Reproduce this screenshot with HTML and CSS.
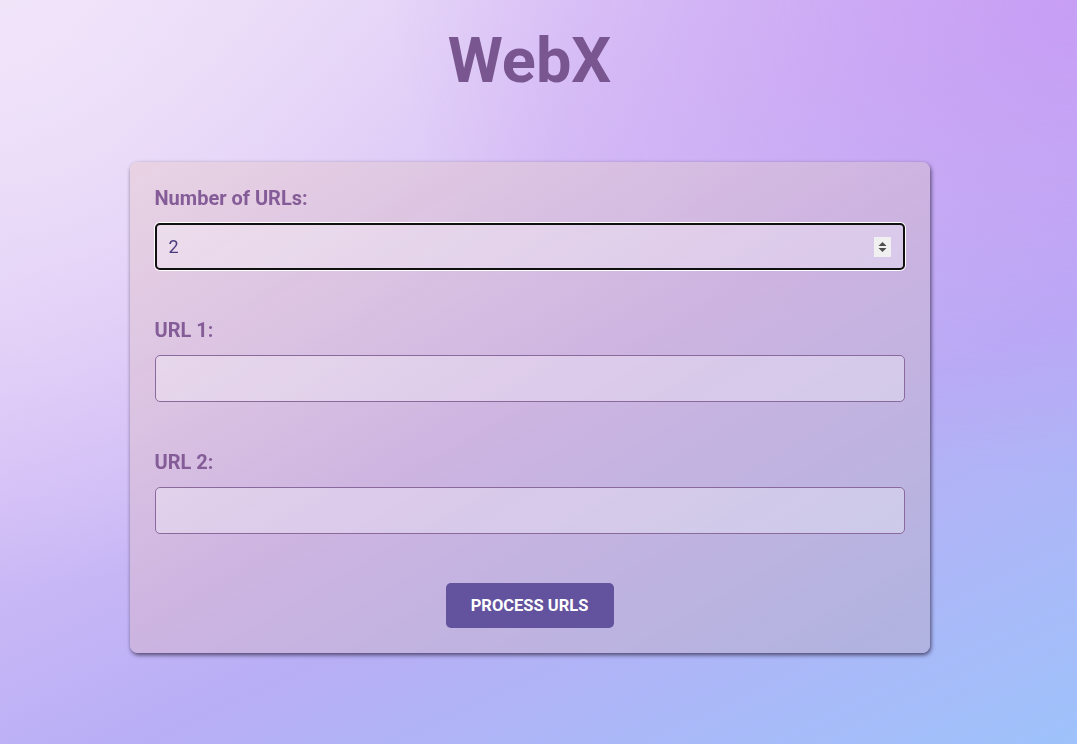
FILE: index.html
```html
<!DOCTYPE html>
<html lang="en">
<head>
<meta charset="utf-8">
<title>WebX</title>
<link rel="stylesheet" href="styles.css">
</head>
<body>
<div class="page">
  <h1 class="title">WebX</h1>
  <form class="card">
    <div class="field">
      <label class="label" for="count">Number of URLs:</label>
      <div class="input-wrap">
        <input class="input input-focused" id="count" type="text" value="2">
        <span class="spinner">
          <svg width="17" height="20" viewBox="0 0 17 20"><path d="M8.5 5 L12.5 9 L4.5 9 Z" fill="#4d4d4d"/><path d="M8.5 15 L12.5 11 L4.5 11 Z" fill="#4d4d4d"/></svg>
        </span>
      </div>
    </div>
    <div class="field">
      <label class="label" for="url1">URL 1:</label>
      <input class="input" id="url1" type="text">
    </div>
    <div class="field">
      <label class="label" for="url2">URL 2:</label>
      <input class="input" id="url2" type="text">
    </div>
    <div class="actions">
      <button class="button" type="button">PROCESS URLS</button>
    </div>
  </form>
</div>
</body>
</html>
```

FILE: styles.css
```css
* { box-sizing: border-box; }
html, body { margin: 0; height: 100%; }
body {
  font-family: Roboto, "Liberation Sans", sans-serif;
  background:
    radial-gradient(circle at 0% 0%, rgba(242,230,250,0.85) 0%, rgba(242,230,250,0) 45%),
    linear-gradient(155deg, #ebdcf8 0%, #d6bff6 35%, #b8aef6 65%, #9ec2fb 100%);
  min-height: 744px;
  overflow: hidden;
}
body::before {
  content: "";
  position: fixed;
  inset: 0;
  background: radial-gradient(ellipse at 100% 0%, rgba(196,150,244,0.8) 0%, rgba(196,150,244,0) 45%);
  pointer-events: none;
}
.page {
  position: relative;
  display: flex;
  flex-direction: column;
  align-items: center;
  padding-top: 24px;
  padding-right: 18px;
}
.title {
  margin: 0;
  font-size: 63px;
  line-height: 74px;
  font-weight: 700;
  color: #7a5690;
}
.card {
  width: 800px;
  margin-top: 64px;
  padding: 24px 25px 25px;
  border-radius: 8px;
  background: linear-gradient(150deg, rgba(232,210,226,0.95) 0%, rgba(206,180,222,0.9) 50%, rgba(176,178,222,0.95) 100%);
  box-shadow: 1px 2px 4px rgba(40,30,60,0.75);
  display: flex;
  flex-direction: column;
}
.field {
  display: flex;
  flex-direction: column;
  margin-bottom: 48px;
}
.label {
  font-size: 20px;
  line-height: 24px;
  font-weight: 700;
  color: #845c97;
  margin-bottom: 13px;
}
.input-wrap { position: relative; }
.input {
  width: 100%;
  height: 47px;
  border: 1px solid #8a6a9c;
  border-radius: 5px;
  background: rgba(255,255,255,0.3);
  font-family: Roboto, "Liberation Sans", sans-serif;
  font-size: 18px;
  color: #4a3a7c;
  padding: 0 12px;
  outline: none;
}
.input-focused {
  border: 2px solid #101010;
  box-shadow: 0 0 0 1px #ffffff;
}
.spinner {
  position: absolute;
  right: 14px;
  top: 14px;
  width: 17px;
  height: 20px;
  background: #f0f0f0;
  display: flex;
}
.actions {
  display: flex;
  justify-content: center;
  margin-top: 1px;
}
.button {
  width: 168px;
  height: 45px;
  border: none;
  border-radius: 5px;
  background: #63539e;
  color: #ffffff;
  font-family: Roboto, "Liberation Sans", sans-serif;
  font-size: 16.5px;
  font-weight: 700;
}
```
